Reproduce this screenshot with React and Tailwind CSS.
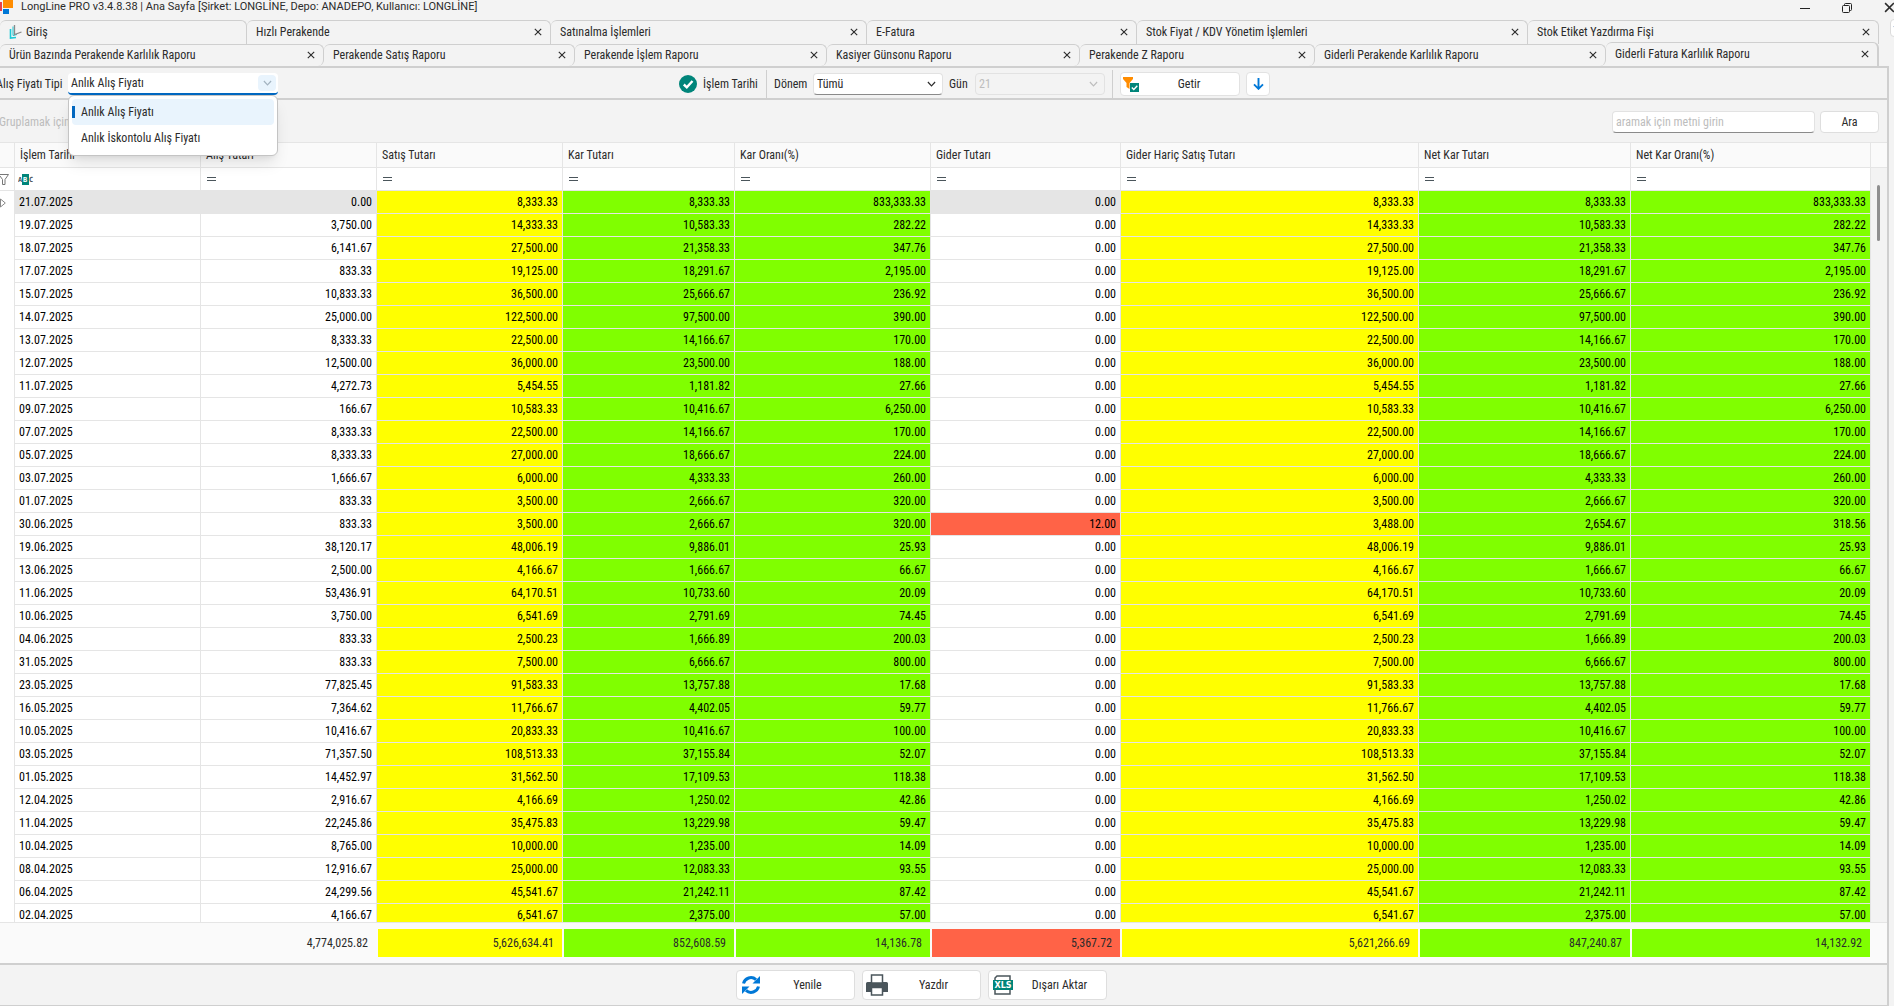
import { useState } from 'react';
import { clsx } from 'clsx';

const MAIN_TABS = [
  { title: 'Giriş', size: 247, home: true },
  { title: 'Hızlı Perakende', size: 304 },
  { title: 'Satınalma İşlemleri', size: 316 },
  { title: 'E-Fatura', size: 270 },
  { title: 'Stok Fiyat / KDV Yönetim İşlemleri', size: 391 },
  { title: 'Stok Etiket Yazdırma Fişi', size: 351 },
];

const REPORT_TABS = [
  { title: 'Ürün Bazında Perakende Karlılık Raporu', size: 324 },
  { title: 'Perakende Satış Raporu', size: 251 },
  { title: 'Perakende İşlem Raporu', size: 252 },
  { title: 'Kasiyer Günsonu Raporu', size: 253 },
  { title: 'Perakende Z Raporu', size: 235 },
  { title: 'Giderli Perakende Karlılık Raporu', size: 291 },
  { title: 'Giderli Fatura Karlılık Raporu', size: 273, active: true },
];

const PRICE_TYPES = ['Anlık Alış Fiyatı', 'Anlık İskontolu Alış Fiyatı'];

const COLUMNS = [
  { title: 'İşlem Tarihi', color: '' },
  { title: 'Alış Tutarı', color: '', total: '4,774,025.82' },
  { title: 'Satış Tutarı', color: 'bg-[#ffff00]', total: '5,626,634.41' },
  { title: 'Kar Tutarı', color: 'bg-[#80ff00]', total: '852,608.59' },
  { title: 'Kar Oranı(%)', color: 'bg-[#80ff00]', total: '14,136.78' },
  { title: 'Gider Tutarı', color: '', total: '5,367.72', totalColor: 'bg-[#ff6347]' },
  { title: 'Gider Hariç Satış Tutarı', color: 'bg-[#ffff00]', total: '5,621,266.69' },
  { title: 'Net Kar Tutarı', color: 'bg-[#80ff00]', total: '847,240.87' },
  { title: 'Net Kar Oranı(%)', color: 'bg-[#80ff00]', total: '14,132.92' },
];

// date, purchase, sale, profit, rate, then expense and the net values when there is an expense
const ROWS = [
  ['21.07.2025', '0.00', '8,333.33', '8,333.33', '833,333.33'],
  ['19.07.2025', '3,750.00', '14,333.33', '10,583.33', '282.22'],
  ['18.07.2025', '6,141.67', '27,500.00', '21,358.33', '347.76'],
  ['17.07.2025', '833.33', '19,125.00', '18,291.67', '2,195.00'],
  ['15.07.2025', '10,833.33', '36,500.00', '25,666.67', '236.92'],
  ['14.07.2025', '25,000.00', '122,500.00', '97,500.00', '390.00'],
  ['13.07.2025', '8,333.33', '22,500.00', '14,166.67', '170.00'],
  ['12.07.2025', '12,500.00', '36,000.00', '23,500.00', '188.00'],
  ['11.07.2025', '4,272.73', '5,454.55', '1,181.82', '27.66'],
  ['09.07.2025', '166.67', '10,583.33', '10,416.67', '6,250.00'],
  ['07.07.2025', '8,333.33', '22,500.00', '14,166.67', '170.00'],
  ['05.07.2025', '8,333.33', '27,000.00', '18,666.67', '224.00'],
  ['03.07.2025', '1,666.67', '6,000.00', '4,333.33', '260.00'],
  ['01.07.2025', '833.33', '3,500.00', '2,666.67', '320.00'],
  ['30.06.2025', '833.33', '3,500.00', '2,666.67', '320.00', '12.00', '3,488.00', '2,654.67', '318.56'],
  ['19.06.2025', '38,120.17', '48,006.19', '9,886.01', '25.93'],
  ['13.06.2025', '2,500.00', '4,166.67', '1,666.67', '66.67'],
  ['11.06.2025', '53,436.91', '64,170.51', '10,733.60', '20.09'],
  ['10.06.2025', '3,750.00', '6,541.69', '2,791.69', '74.45'],
  ['04.06.2025', '833.33', '2,500.23', '1,666.89', '200.03'],
  ['31.05.2025', '833.33', '7,500.00', '6,666.67', '800.00'],
  ['23.05.2025', '77,825.45', '91,583.33', '13,757.88', '17.68'],
  ['16.05.2025', '7,364.62', '11,766.67', '4,402.05', '59.77'],
  ['10.05.2025', '10,416.67', '20,833.33', '10,416.67', '100.00'],
  ['03.05.2025', '71,357.50', '108,513.33', '37,155.84', '52.07'],
  ['01.05.2025', '14,452.97', '31,562.50', '17,109.53', '118.38'],
  ['12.04.2025', '2,916.67', '4,166.69', '1,250.02', '42.86'],
  ['11.04.2025', '22,245.86', '35,475.83', '13,229.98', '59.47'],
  ['10.04.2025', '8,765.00', '10,000.00', '1,235.00', '14.09'],
  ['08.04.2025', '12,916.67', '25,000.00', '12,083.33', '93.55'],
  ['06.04.2025', '24,299.56', '45,541.67', '21,242.11', '87.42'],
  ['02.04.2025', '4,166.67', '6,541.67', '2,375.00', '57.00'],
].map((r) => (r.length > 5 ? r : [...r, '0.00', r[2], r[3], r[4]]));

function AppLogo() {
  return (
    <svg width="14" height="14" viewBox="0 0 14 14" aria-hidden="true">
      <rect x="0" y="2" width="2" height="9" fill="#e8414b" />
      <rect x="3" y="0" width="10" height="8" fill="#ff8c00" />
      <rect x="3" y="9" width="6" height="5" fill="#0078d7" />
    </svg>
  );
}

function HomeIcon() {
  return (
    <svg width="13" height="14" viewBox="0 0 13 14" fill="none" aria-hidden="true">
      <path d="M1.500 4V13L7 12.500" stroke="#19c9d6" strokeWidth="1.600" />
      <path d="M4 1.500V10.500L8 9.500" stroke="#19c9d6" strokeWidth="1" />
      <path d="M5.500 0V9.500L12.500 7" stroke="#8a8a8a" strokeWidth="1.300" />
    </svg>
  );
}

function CloseIcon({ className }) {
  return (
    <svg viewBox="0 0 10 10" className={className} fill="none" stroke="currentColor" strokeWidth="1.400" aria-hidden="true">
      <path d="M1 1L9 9M9 1L1 9" />
    </svg>
  );
}

function ChevronIcon({ className }) {
  return (
    <svg viewBox="0 0 10 6" width="9" height="6" className={className} fill="none" stroke="currentColor" strokeWidth="1.300" aria-hidden="true">
      <path d="M1 .8L5 5L9 .8" />
    </svg>
  );
}

function CheckCircleIcon() {
  return (
    <svg width="18" height="18" viewBox="0 0 18 18" aria-hidden="true">
      <circle cx="9" cy="9" r="9" fill="#00857a" />
      <path d="M4.800 9.500L7.800 12.300L13.500 6" fill="none" stroke="#fff" strokeWidth="2.400" />
    </svg>
  );
}

function FilterCheckIcon() {
  return (
    <svg width="16" height="15" viewBox="0 0 16 15" aria-hidden="true">
      <path d="M0 0H10V2L6.500 6V12L3.500 10V6L0 2Z" fill="#ff8c00" />
      <rect x="7" y="6" width="9" height="9" fill="#00857a" />
      <path d="M8.800 10.500L10.800 12.500L14.300 8.800" fill="none" stroke="#fff" strokeWidth="1.400" />
    </svg>
  );
}

function DownIcon() {
  return (
    <svg width="11" height="12" viewBox="0 0 11 12" fill="none" stroke="#0078d7" strokeWidth="1.900" aria-hidden="true">
      <path d="M5.500 0V11M1 6.300L5.500 10.800L10 6.300" />
    </svg>
  );
}

function RefreshIcon() {
  return (
    <svg width="18" height="18" viewBox="0 0 18 18" aria-hidden="true">
      <path d="M1.500 7.500A7.600 7.600 0 0 1 14 3.600" fill="none" stroke="#0078d7" strokeWidth="3" />
      <path d="M18 0V7.500H10.500Z" fill="#0078d7" />
      <path d="M16.500 10.500A7.600 7.600 0 0 1 4 14.400" fill="none" stroke="#0078d7" strokeWidth="3" />
      <path d="M0 18V10.500H7.500Z" fill="#0078d7" />
    </svg>
  );
}

function PrinterIcon() {
  return (
    <svg width="22" height="22" viewBox="0 0 22 22" aria-hidden="true">
      <path d="M0 9.500Q0 8 1.500 8H20.500Q22 8 22 9.500V18H17V14H5V18H0Z" fill="#4a555b" />
      <path d="M5.500 9V1H16.500V9Z" fill="#fff" stroke="#4a555b" strokeWidth="1.500" />
      <path d="M5.500 13.500H16.500V21H5.500Z" fill="#fff" stroke="#4a555b" strokeWidth="1.500" />
    </svg>
  );
}

function XlsIcon() {
  return (
    <svg width="20" height="20" viewBox="0 0 20 20" aria-hidden="true">
      <path d="M2 6V3L4 1H17V19H2V14" fill="#fff" stroke="#4a555b" strokeWidth="1.500" />
      <rect x="0" y="5" width="20" height="10" fill="#00857a" />
      <text x="10" y="13" textAnchor="middle" fill="#fff" className="font-['DejaVu_Sans',sans-serif] text-[8px] font-bold">
        XLS
      </text>
    </svg>
  );
}

function EqualsIcon() {
  return (
    <svg width="9" height="4" viewBox="0 0 9 4" fill="#4a555b" aria-hidden="true">
      <rect width="9" height="1" />
      <rect y="3" width="9" height="1" />
    </svg>
  );
}

function AbcIcon() {
  return (
    <svg width="16" height="12" viewBox="0 0 16 12" aria-hidden="true">
      <rect x="4" y="1" width="7" height="11" fill="#00857a" />
      <g className="font-['DejaVu_Sans_Mono',monospace] text-[7px] font-bold">
        <text x="0" y="9" fill="#4a555b">A</text>
        <text x="5" y="9" fill="#fff">B</text>
        <text x="11" y="9" fill="#4a555b">C</text>
      </g>
    </svg>
  );
}

function TabBar({ tabs, label, lower }) {
  return (
    <div role="tablist" aria-label={label} className={clsx('flex items-end pr-[15px]', lower ? 'h-[22px]' : 'h-6')}>
      {tabs.map((tab) => (
        <div
          key={tab.title}
          style={{ flexBasis: tab.size }}
          className={clsx(
            'flex min-w-0 shrink grow items-center rounded-t-md border-t border-r border-[#cfcfcf] bg-[#f3f3f3] pr-2 pb-[2px] pl-[9px]',
            lower && !tab.active && 'h-[22px] rounded-br-md',
            tab.active && 'h-6 border-r-2',
            !lower && 'h-6'
          )}
        >
          <button type="button" role="tab" aria-selected={Boolean(tab.active)} className="flex min-w-0 flex-1 items-center gap-1 text-left whitespace-nowrap">
            {tab.home && <HomeIcon />}
            {tab.title}
          </button>
          {!tab.home && (
            <button type="button" aria-label={`${tab.title} kapat`}>
              <CloseIcon className="size-2" />
            </button>
          )}
        </div>
      ))}
    </div>
  );
}

function PriceTypePicker() {
  const [value, setValue] = useState(PRICE_TYPES[0]);
  const [open, setOpen] = useState(true);

  const pick = (type) => {
    setValue(type);
    setOpen(false);
  };

  return (
    <div className="relative w-[210px]">
      <select
        id="price-type"
        value={value}
        onChange={(e) => pick(e.target.value)}
        className="h-[22px] w-full appearance-none rounded border-b-2 border-[#0067c0] bg-white pl-[3px] outline-none"
      >
        {PRICE_TYPES.map((type) => (
          <option key={type}>{type}</option>
        ))}
      </select>
      <button
        type="button"
        aria-label="Listeyi aç"
        onClick={() => setOpen(!open)}
        className="absolute top-[2px] right-[2px] flex h-4 w-[18px] items-center justify-center rounded-sm bg-[#e9f4fd] text-[#a3b3c0]"
      >
        <ChevronIcon />
      </button>
      {open && (
        <ul className="absolute top-[22px] left-0 z-20 w-full rounded-md border border-[#c4c4c4] bg-white px-[3px] pt-[3px] pb-1 shadow-lg">
          {PRICE_TYPES.map((type) => (
            <li key={type}>
              <button
                type="button"
                onClick={() => pick(type)}
                className={clsx('flex h-[26px] w-full items-center gap-1.5 rounded text-left', type === value && 'bg-[#e9f4fd]')}
              >
                <span className={clsx('h-3 w-[3px]', type === value && 'bg-[#0067c0]')} />
                {type}
              </button>
            </li>
          ))}
        </ul>
      )}
    </div>
  );
}

function Divider() {
  return <div className="w-px self-stretch bg-[#cfcfcf]" />;
}

function Toolbar() {
  return (
    <div className="flex h-8 items-center border-t-2 border-[#cfcfcf] pt-[2px]">
      <label htmlFor="price-type" className="-ml-1 w-[72px] whitespace-nowrap">
        Alış Fiyatı Tipi
      </label>
      <PriceTypePicker />
      <div className="grow-[13]" />
      <CheckCircleIcon />
      <span className="w-[69px] pl-[6px]">İşlem Tarihi</span>
      <Divider />
      <label htmlFor="period" className="w-[46px] pl-[7px]">
        Dönem
      </label>
      <div className="relative w-[130px]">
        <select id="period" className="h-[22px] w-full appearance-none rounded border border-[#e2e2e2] border-b-[#8a8a8a] bg-white pl-[3px]">
          <option>Tümü</option>
        </select>
        <ChevronIcon className="pointer-events-none absolute top-2 right-[7px]" />
      </div>
      <label htmlFor="day" className="w-8 pl-[6px]">
        Gün
      </label>
      <div className="relative w-[130px] text-[#bdbdbd]">
        <select id="day" disabled className="h-[22px] w-full appearance-none rounded border border-[#e2e2e2] pl-[3px] opacity-100">
          <option>21</option>
        </select>
        <ChevronIcon className="pointer-events-none absolute top-2 right-[7px]" />
      </div>
      <div className="w-[7px]" />
      <Divider />
      <button type="button" className="ml-[7px] flex h-6 w-[120px] items-center rounded border border-[#e2e2e2] bg-white pl-[2px]">
        <FilterCheckIcon />
        <span className="flex-1 text-center">Getir</span>
      </button>
      <button type="button" aria-label="Aşağı" className="ml-[6px] flex size-6 items-center justify-center rounded border border-[#e2e2e2] bg-white">
        <DownIcon />
      </button>
      <div className="grow-[20]" />
    </div>
  );
}

function ColumnWidths() {
  return (
    <colgroup>
      <col className="w-[15px]" />
      <col className="w-[186px]" />
      <col className="w-[176px]" />
      <col className="w-[186px]" />
      <col className="w-[172px]" />
      <col className="w-[196px]" />
      <col className="w-[190px]" />
      <col className="w-[298px]" />
      <col className="w-[212px]" />
      <col className="w-[240px]" />
    </colgroup>
  );
}

function ReportGrid() {
  return (
    <div className="flex min-h-0 flex-1 overflow-hidden">
      <div className="min-w-0 flex-1">
        <table className="w-full table-fixed border-separate border-spacing-0 bg-white">
          <ColumnWidths />
          <thead>
            <tr className="h-[26px] bg-[#fafafa]">
              <th className="border-y border-r border-[#e5e5e5]" />
              {COLUMNS.map((col) => (
                <th key={col.title} className="border-y border-r border-[#e5e5e5] pl-[5px] text-left font-normal whitespace-nowrap">
                  {col.title}
                </th>
              ))}
            </tr>
            <tr className="h-[23px]">
              <td className="overflow-hidden border-r border-b border-[#e5e5e5]">
                <svg width="9" height="11" viewBox="0 0 9 11" fill="none" stroke="#777" aria-hidden="true">
                  <path d="M0 .5H8.500L5 5.500V10.500H2.500V5.500L0 2" />
                </svg>
              </td>
              {COLUMNS.map((col, i) => (
                <td key={col.title} className={clsx('border-r border-b border-[#e5e5e5]', i === 0 ? 'pl-[3px]' : 'pl-[6px]')}>
                  {i === 0 ? <AbcIcon /> : <EqualsIcon />}
                </td>
              ))}
            </tr>
          </thead>
          <tbody className="text-black">
            {ROWS.map((row, r) => (
              <tr key={row[0]} className={clsx('h-[23px]', r === 0 && 'bg-[#e5e5e5]')}>
                <td className="border-r border-[#e5e5e5] bg-white">
                  {r === 0 && (
                    <svg width="6" height="10" viewBox="0 0 6 10" fill="none" stroke="#888" aria-hidden="true">
                      <path d="M.5 1L5.300 5L.5 9Z" />
                    </svg>
                  )}
                </td>
                {row.map((cell, i) => (
                  <td
                    key={i}
                    className={clsx(
                      'border-r border-b border-[#e5e5e5]',
                      i === 0 ? 'pl-1' : 'pr-1 text-right',
                      i === 5 && cell !== '0.00' ? 'bg-[#ff6347]' : COLUMNS[i].color
                    )}
                  >
                    {cell}
                  </td>
                ))}
              </tr>
            ))}
          </tbody>
        </table>
      </div>
      <div className="flex w-4 flex-col">
        <div className="h-[26px] border-y border-[#e5e5e5] bg-[#fafafa]" />
        <div className="mt-[17px] ml-[6px] h-14 w-[3px] rounded-full bg-[#8f8f8f]" />
      </div>
    </div>
  );
}

function TotalsRow() {
  return (
    <div className="flex h-[41px] items-center border-t border-[#e5e5e5] bg-[#fafafa] pr-4">
      <table className="w-full table-fixed border-separate border-spacing-0">
        <ColumnWidths />
        <tbody>
          <tr>
            <td />
            {COLUMNS.map((col) => (
              <td key={col.title} className="px-px">
                <div className={clsx('flex h-7 items-center justify-end pr-2', col.totalColor || col.color)}>{col.total}</div>
              </td>
            ))}
          </tr>
        </tbody>
      </table>
    </div>
  );
}

function ActionButton({ icon, label }) {
  return (
    <button type="button" className="flex h-[30px] w-[119px] items-center rounded border border-[#dedede] bg-white pl-[3px]">
      <span className="flex w-[22px] justify-center">{icon}</span>
      <span className="flex-1 text-center">{label}</span>
    </button>
  );
}

export default function App() {
  return (
    <div className="flex h-screen flex-col overflow-hidden bg-[#f3f3f3] font-['Roboto_Condensed','Roboto',sans-serif] text-[12px] leading-[14px] text-[#2b2b2b]">
      <header className="flex h-5 items-start justify-between">
        <div className="flex gap-[7px]">
          <AppLogo />
          <h1 className="font-['Roboto',sans-serif] text-[11px] whitespace-nowrap">
            LongLine PRO v3.4.8.38 | Ana Sayfa [Şirket: LONGLİNE, Depo: ANADEPO, Kullanıcı: LONGLİNE]
          </h1>
        </div>
        <div className="-mr-px flex gap-8 pt-[2px]">
          <button type="button" aria-label="Simge durumuna küçült">
            <svg width="10" height="10" viewBox="0 0 10 10" aria-hidden="true">
              <rect y="5" width="10" height="1" fill="#222" />
            </svg>
          </button>
          <button type="button" aria-label="Önceki boyut">
            <svg width="10" height="10" viewBox="0 0 10 10" fill="none" stroke="#222" aria-hidden="true">
              <rect x=".5" y="2.500" width="7" height="7" rx="1" />
              <path d="M2.500 2V1.500Q2.500 .5 3.500 .5H8.500Q9.500 .5 9.500 1.500V6.500Q9.500 7.500 8.500 7.500H8" />
            </svg>
          </button>
          <button type="button" aria-label="Kapat">
            <CloseIcon className="size-[11px]" />
          </button>
        </div>
      </header>

      <div className="relative">
        <TabBar tabs={MAIN_TABS} label="Modüller" />
        <TabBar tabs={REPORT_TABS} label="Raporlar" lower />
        <button type="button" aria-label="Sekme listesi" className="absolute -top-px -right-2 flex h-[18px] w-3 items-center rounded border border-[#dcdcdc] bg-white pl-[2px] text-[#5673a8]">
          <ChevronIcon />
        </button>
      </div>

      <main className="mr-[5px] flex min-h-0 flex-1 flex-col border-r-2 border-b border-[#cfcfcf]">
        <Toolbar />

        <div className="flex h-11 items-center justify-between border-t-2 border-[#cfcfcf] pt-px pr-2">
          <span className="-ml-px text-[#bdbdbd]">Gruplamak için</span>
          <div className="flex gap-[5px]">
            <input
              type="text"
              aria-label="Ara"
              placeholder="aramak için metni girin"
              className="h-[22px] w-[203px] rounded border border-[#e2e2e2] border-b-[#8a8a8a] bg-white px-[3px] placeholder:text-[#bdbdbd]"
            />
            <button type="button" className="h-[22px] w-[59px] rounded border border-[#dedede] bg-white">
              Ara
            </button>
          </div>
        </div>

        <ReportGrid />
        <TotalsRow />

        <div className="flex h-[42px] items-center justify-center gap-[7px] border-t-2 border-[#cfcfcf] pr-[45px]">
          <ActionButton icon={<RefreshIcon />} label="Yenile" />
          <ActionButton icon={<PrinterIcon />} label="Yazdır" />
          <ActionButton icon={<XlsIcon />} label="Dışarı Aktar" />
        </div>
      </main>
    </div>
  );
}
